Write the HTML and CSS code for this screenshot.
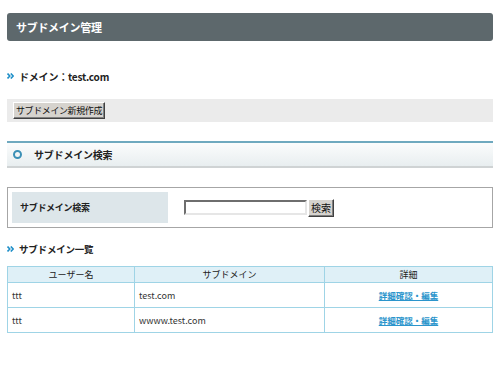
FILE: index.html
```html
<!DOCTYPE html>
<html lang="ja">
<head>
<meta charset="utf-8">
<link rel="stylesheet" href="styles.css">
</head>
<body>
<div class="page">
  <h1 class="title">サブドメイン管理</h1>

  <h2 class="sub"><svg class="arr" width="7" height="6" viewBox="0 0 7 6"><path d="M0.5 0.5 L2.8 3 L0.5 5.5 M3.8 0.5 L6.1 3 L3.8 5.5" fill="none" stroke="#1f8fc8" stroke-width="1.6"/></svg>ドメイン：test.com</h2>

  <div class="toolbar"><button class="btn">サブドメイン新規作成</button></div>

  <div class="section">
    <span class="ring"></span>
    <span class="section-title">サブドメイン検索</span>
  </div>

  <div class="search">
    <div class="search-label">サブドメイン検索</div>
    <div class="search-field">
      <input class="input" type="text"><button class="btn btn-s">検索</button>
    </div>
  </div>

  <h2 class="sub sub2"><svg class="arr" width="7" height="6" viewBox="0 0 7 6"><path d="M0.5 0.5 L2.8 3 L0.5 5.5 M3.8 0.5 L6.1 3 L3.8 5.5" fill="none" stroke="#1f8fc8" stroke-width="1.6"/></svg>サブドメイン一覧</h2>

  <table class="list">
    <colgroup><col class="c1"><col class="c2"><col class="c3"></colgroup>
    <thead>
      <tr><th>ユーザー名</th><th>サブドメイン</th><th>詳細</th></tr>
    </thead>
    <tbody>
      <tr><td>ttt</td><td>test.com</td><td class="ctr"><a href="#">詳細確認・編集</a></td></tr>
      <tr><td>ttt</td><td>wwww.test.com</td><td class="ctr"><a href="#">詳細確認・編集</a></td></tr>
    </tbody>
  </table>
</div>
</body>
</html>
```

FILE: styles.css
```css
html, body {
  margin: 0;
  padding: 0;
  background: #fff;
}
body {
  font-family: "Noto Sans CJK JP", "Noto Sans", sans-serif;
  color: #222;
}
.page {
  padding: 13px 7px 0 7px;
}
.title {
  margin: 0;
  height: 28px;
  line-height: 28px;
  padding-left: 9px;
  background: #5d686c;
  border-radius: 3px;
  color: #fff;
  font-size: 11px;
  font-weight: bold;
  letter-spacing: -0.3px;
}
.sub {
  margin: 0;
  display: flex;
  align-items: center;
  font-size: 10px;
  font-weight: bold;
  height: 14px;
  margin-top: 28px;
  color: #222;
  letter-spacing: -0.2px;
}
.arr {
  margin-right: 5px;
  flex: none;
}
.toolbar {
  margin-top: 16px;
  background: #ebebeb;
  height: 23px;
  display: flex;
  align-items: center;
  padding-left: 6px;
}
.btn {
  font-family: "Noto Sans CJK JP", sans-serif;
  font-size: 9px;
  letter-spacing: -0.4px;
  color: #111;
  background: #d6d3ce;
  border: 1px solid;
  border-color: #fff #404040 #404040 #fff;
  box-shadow: inset -1px -1px 0 #808080;
  height: 17px;
  width: 92px;
  padding: 0 2px;
  line-height: 14px;
  margin: 0;
  white-space: nowrap;
}
.section {
  margin-top: 19px;
  height: 23px;
  border-top: 2px solid #6fa9bf;
  border-bottom: 2px solid #cfd3d4;
  background: linear-gradient(#fbfcfc, #e8eef0);
  display: flex;
  align-items: center;
  padding-left: 6px;
}
.ring {
  width: 5px;
  height: 5px;
  border: 2.3px solid #3b90b6;
  border-radius: 50%;
  margin-right: 12px;
}
.section-title {
  font-size: 10px;
  font-weight: bold;
  color: #222;
  letter-spacing: -0.2px;
}
.search {
  margin-top: 19px;
  border: 1px solid #a6a6a6;
  padding: 4px;
  display: flex;
  height: 31px;
}
.search-label {
  width: 148px;
  background: #dde6ea;
  font-size: 9px;
  font-weight: bold;
  display: flex;
  align-items: center;
  padding-left: 8px;
  letter-spacing: -0.3px;
}
.search-field {
  display: flex;
  align-items: center;
  padding-left: 16px;
}
.input {
  width: 119px;
  height: 11px;
  padding: 0;
  margin: 0;
  border: 2px solid;
  border-color: #6e6e6e #e6e6e6 #e6e6e6 #6e6e6e;
  background: #fff;
}
.btn-s {
  margin-left: 1px;
  height: 18px;
  width: auto;
  font-size: 10px;
  letter-spacing: 0;
}
.sub2 {
  margin-top: 14px;
  font-size: 9.5px;
}
.list {
  margin-top: 10px;
  width: 100%;
  border-collapse: collapse;
  font-size: 9px;
  color: #333;
}
.c1 { width: 127px; }
.c2 { width: 190px; }
.list th, .list td {
  border: 1px solid #9fd4e6;
  padding: 0 4px;
}
.list th {
  background: #dff0f7;
  font-weight: normal;
  height: 15px;
  color: #222;
}
.list td {
  height: 24px;
}
.list td.ctr { text-align: center; }
.list a {
  color: #2b95cc;
  font-weight: bold;
  font-size: 8.5px;
  text-decoration: underline;
}
```
